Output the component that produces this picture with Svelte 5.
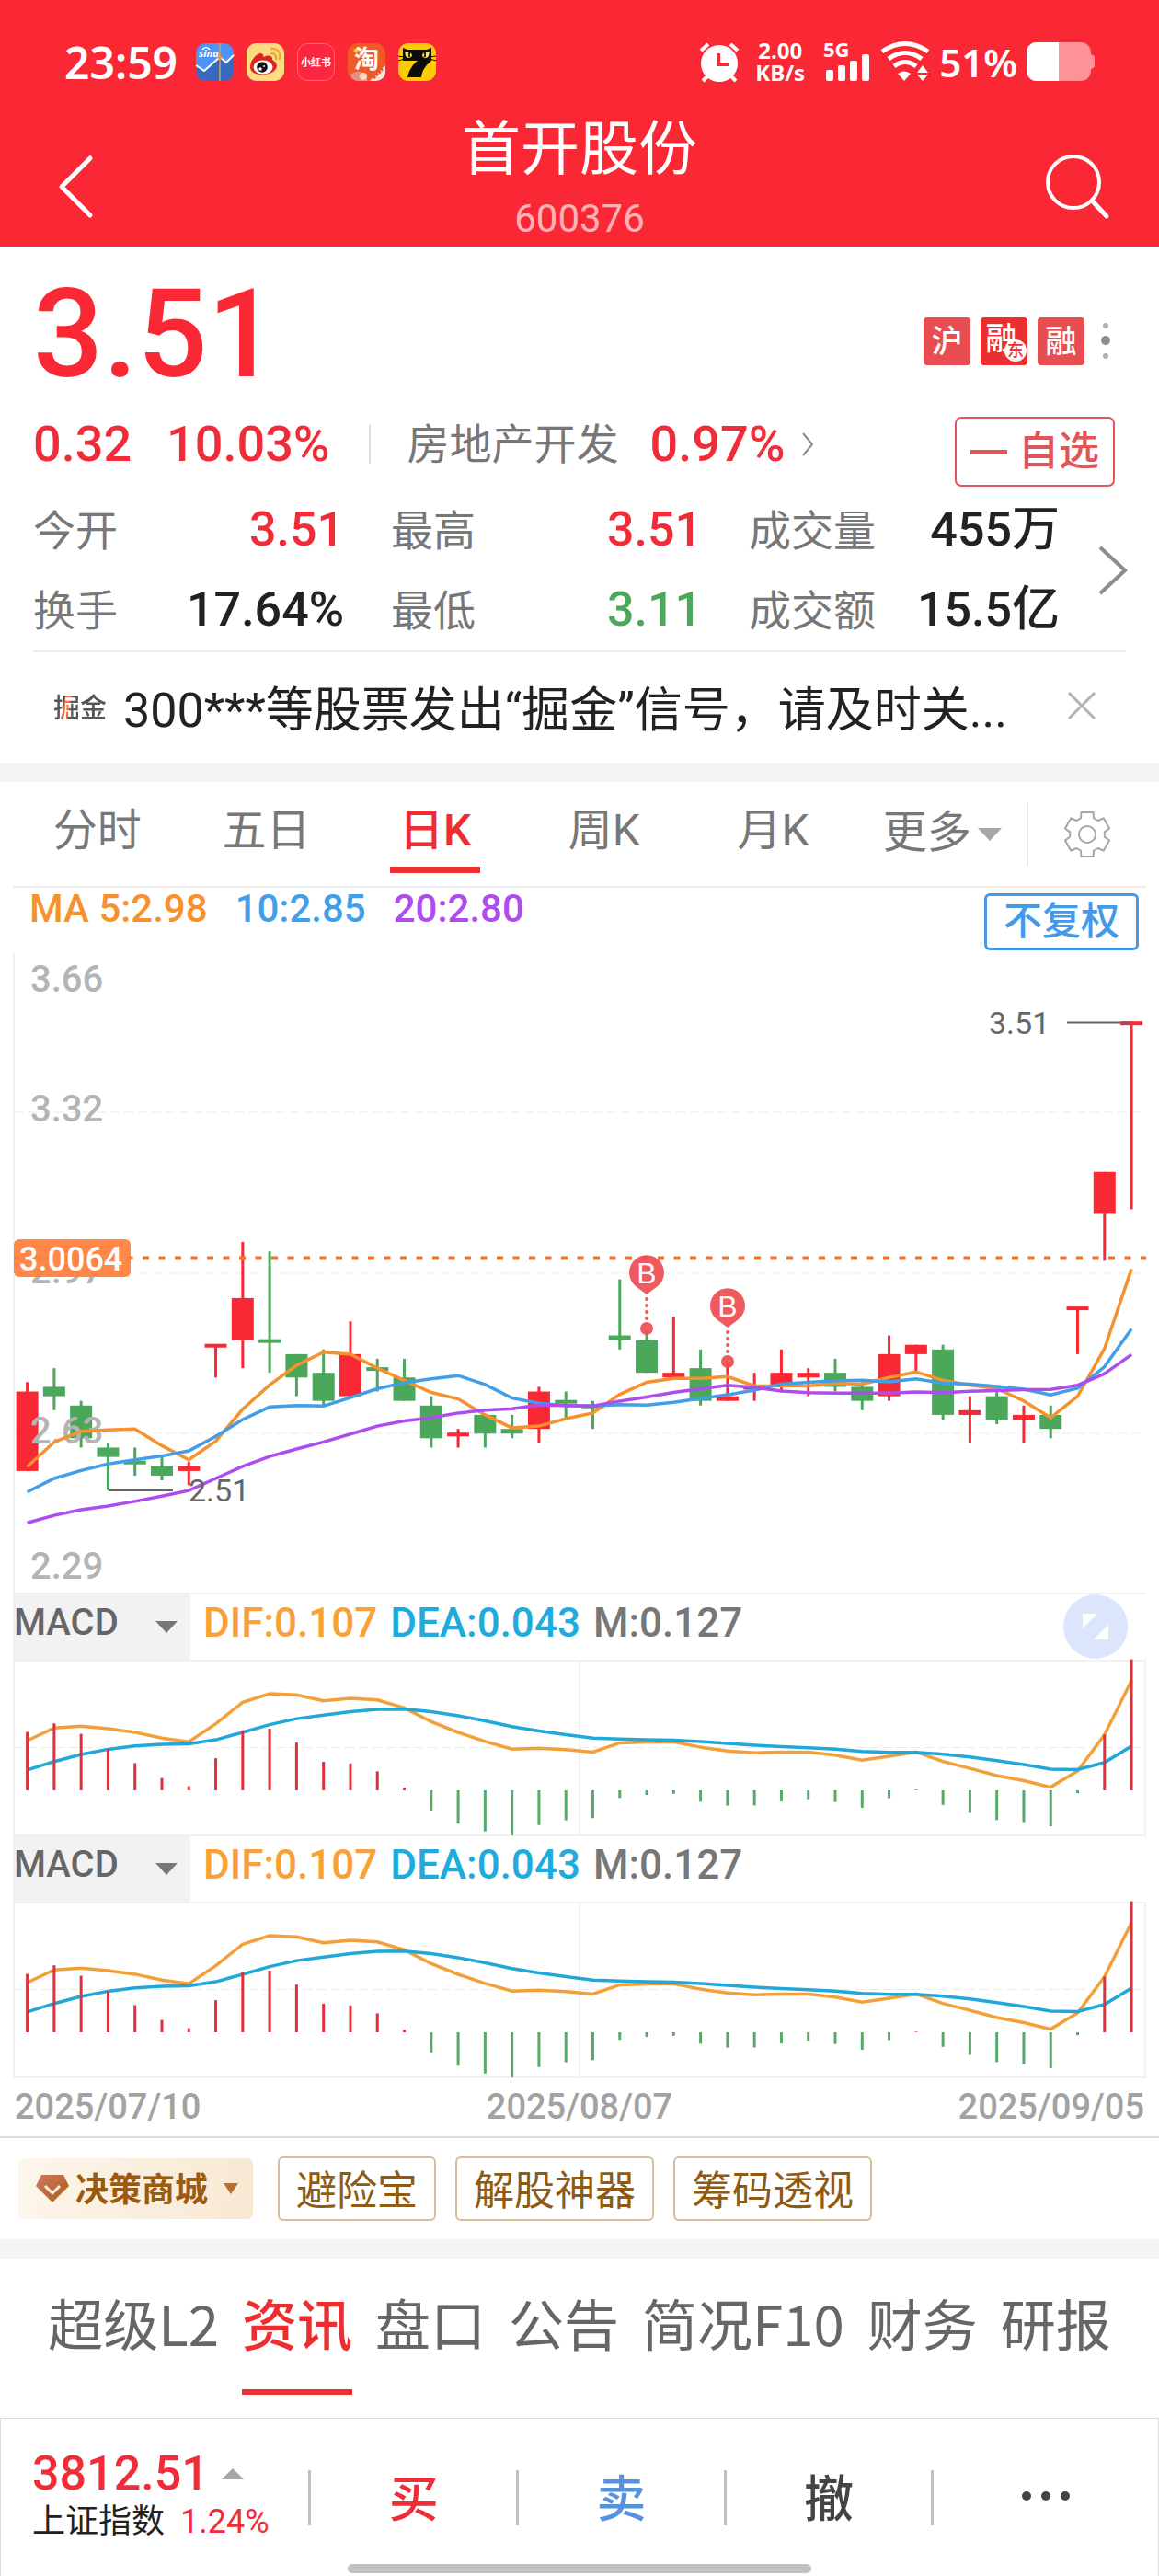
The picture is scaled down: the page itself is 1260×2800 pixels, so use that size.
<script>
  // Daily candles: [open, high, low, close]
  const CANDLES = [
    [2.55, 2.74, 2.55, 2.72], [2.73, 2.77, 2.68, 2.71], [2.69, 2.70, 2.60, 2.62],
    [2.60, 2.61, 2.51, 2.58], [2.57, 2.60, 2.54, 2.57], [2.56, 2.58, 2.53, 2.54],
    [2.55, 2.57, 2.52, 2.56], [2.82, 2.82, 2.75, 2.82], [2.83, 3.04, 2.77, 2.92],
    [2.83, 3.02, 2.76, 2.83], [2.80, 2.80, 2.71, 2.75], [2.76, 2.81, 2.69, 2.70],
    [2.71, 2.87, 2.71, 2.80], [2.77, 2.79, 2.72, 2.77], [2.75, 2.79, 2.70, 2.70],
    [2.69, 2.71, 2.60, 2.62], [2.63, 2.64, 2.60, 2.63], [2.67, 2.67, 2.60, 2.63],
    [2.64, 2.67, 2.62, 2.63], [2.64, 2.73, 2.61, 2.72], [2.70, 2.72, 2.66, 2.70],
    [2.69, 2.70, 2.64, 2.69], [2.84, 2.96, 2.81, 2.83], [2.83, 2.85, 2.76, 2.76],
    [2.75, 2.88, 2.75, 2.76], [2.77, 2.81, 2.69, 2.70], [2.70, 2.78, 2.70, 2.71],
    [2.73, 2.76, 2.70, 2.73], [2.73, 2.81, 2.72, 2.76], [2.75, 2.77, 2.71, 2.76],
    [2.76, 2.79, 2.72, 2.73], [2.73, 2.74, 2.68, 2.70], [2.71, 2.84, 2.70, 2.80],
    [2.80, 2.82, 2.76, 2.82], [2.81, 2.82, 2.66, 2.67], [2.67, 2.71, 2.61, 2.68],
    [2.71, 2.72, 2.65, 2.66], [2.66, 2.69, 2.61, 2.67], [2.67, 2.69, 2.62, 2.64],
    [2.90, 2.90, 2.80, 2.90], [3.10, 3.19, 3.00, 3.19], [3.51, 3.51, 3.11, 3.51]
  ];

  // Days that opened flat take their color from the previous close
  const FLAT_DOWN = [4, 9, 13, 20, 21];

  // Averages for the days whose window starts before the first candle
  const MA_HEADS = {
    5: [2.559, 2.612, 2.635, 2.638],
    10: [2.505, 2.534, 2.551, 2.565, 2.574, 2.582, 2.593, 2.624, 2.660],
    20: [
      2.439, 2.455, 2.467, 2.475, 2.485, 2.496, 2.508, 2.534, 2.560, 2.581,
      2.597, 2.612, 2.629, 2.646, 2.657, 2.664, 2.674, 2.680, 2.683
    ]
  };

  const STEP = 29.28;
  const TOP_PRICE = 3.66;
  const PX_PER_YUAN = 508;
  const x = (i) => 15.6 + i * STEP;
  const y = (price) => (TOP_PRICE - price) * PX_PER_YUAN;

  const closes = CANDLES.map((c) => c[3]);

  const candles = CANDLES.map(([open, high, low, close], i) => {
    const top = y(Math.max(open, close));
    const body = Math.abs(open - close) * PX_PER_YUAN;
    return {
      x: x(i),
      up: close > open || (close === open && !FLAT_DOWN.includes(i)),
      high: y(high),
      low: y(low),
      top: body < 4 ? top - 1 : top,
      height: Math.max(body, 4)
    };
  });

  function movingAverage(days) {
    return closes.map((_, i) => {
      if (i < days - 1) return MA_HEADS[days][i];
      return closes.slice(i - days + 1, i + 1).reduce((a, b) => a + b, 0) / days;
    });
  }

  function toPoints(values, scale) {
    return values.map((v, i) => `${x(i).toFixed(1)},${scale(v).toFixed(1)}`).join(' ');
  }

  const maLines = [
    { days: 5, color: '#f6922d' },
    { days: 10, color: '#439ee8' },
    { days: 20, color: '#ad4ded' }
  ].map((m) => ({ ...m, points: toPoints(movingAverage(m.days), y) }));

  function calculateMacd() {
    let fast = 2.5109;
    let slow = 2.4626;
    let dea = 0.0199;
    return closes.map((close, i) => {
      if (i > 0) {
        fast = (fast * 11 + close * 2) / 13;
        slow = (slow * 25 + close * 2) / 27;
        dea = dea * 0.8 + (fast - slow) * 0.2;
      }
      const dif = fast - slow;
      return { dif, dea, bar: (dif - dea) * 2 };
    });
  }

  const macd = calculateMacd();
  const ZERO = 142;
  const my = (v) => ZERO - v * 1118;
  const difPoints = toPoints(macd.map((m) => m.dif), my);
  const deaPoints = toPoints(macd.map((m) => m.dea), my);

  const axisLabels = [
    { text: '3.66', y: 43 },
    { text: '3.32', y: 184 },
    { text: '2.97', y: 360 },
    { text: '2.63', y: 534 },
    { text: '2.29', y: 681 }
  ];

  const markers = [
    { x: 689, y: 349 },
    { x: 777, y: 385 }
  ];

  const stats = [
    { label: '今开', value: '3.51', tone: 'up' },
    { label: '最高', value: '3.51', tone: 'up' },
    { label: '成交量', value: '455万', tone: '' },
    { label: '换手', value: '17.64%', tone: '' },
    { label: '最低', value: '3.11', tone: 'down' },
    { label: '成交额', value: '15.5亿', tone: '' }
  ];

  const periods = ['分时', '五日', '日K', '周K', '月K'];
  let period = '日K';

  const tools = ['避险宝', '解股神器', '筹码透视'];

  const sections = ['超级L2', '资讯', '盘口', '公告', '简况F10', '财务', '研报'];
  let section = '资讯';

  function gearPoints() {
    const points = [];
    for (let k = 0; k < 6; k++) {
      const mid = -90 + k * 60;
      for (const [offset, r] of [[-22, 19], [-15, 25], [15, 25], [22, 19]]) {
        const a = ((mid + offset) * Math.PI) / 180;
        points.push(`${(27 + r * Math.cos(a)).toFixed(1)},${(27 + r * Math.sin(a)).toFixed(1)}`);
      }
    }
    return points.join(' ');
  }
</script>

<div class="page">
  <header>
    <div class="status">
      <span class="clock">23:59</span>
      <div class="apps">
        <svg viewBox="0 0 41 41" aria-hidden="true">
          <rect width="41" height="41" rx="11" fill="#4d93f8" />
          <path d="M0 24 L9 30 L26 15 L33 21 L41 13 V30 A11 11 0 0 1 30 41 H11 A11 11 0 0 1 0 30 Z" fill="#3769bd" />
          <path d="M0 24 L9 30 L26 15 L33 21 L41 13" fill="none" stroke="#fff" stroke-width="2" />
          <path d="M26 0 V41" stroke="#d9a45a" stroke-width="1.4" />
          <circle cx="26" cy="15.500" r="2.400" fill="#f79a2c" />
          <path d="M7 7 q4 -5 8 0" fill="none" stroke="#fff" stroke-width="1.600" />
          <text x="3" y="15" class="sina">sina</text>
        </svg>
        <svg viewBox="0 0 41 41" aria-hidden="true">
          <rect width="41" height="41" rx="11" fill="#fbdc83" />
          <path d="M4 26 C4 18 12 10 16 11 C19 12 18 15 19 15 C24 12 29 14 28 18 C33 20 35 26 30 30 C24 36 4 36 4 26 Z" fill="#dc2420" />
          <ellipse cx="18" cy="26" rx="10.500" ry="7.500" fill="#fff" />
          <circle cx="17" cy="26" r="5.800" fill="#111" />
          <circle cx="15" cy="28" r="1.800" fill="#fff" />
          <circle cx="19" cy="25" r="0.900" fill="#fff" />
          <path d="M27 6 C33 5 38 10 36 17 M27 11 C31 11 33 14 32 17" fill="none" stroke="#f3a72c" stroke-width="2.400" stroke-linecap="round" />
        </svg>
        <svg viewBox="0 0 41 41" aria-hidden="true">
          <rect x="0.500" y="0.500" width="40" height="40" rx="11" fill="#fd2640" stroke="#ff6a78" />
          <text x="20.500" y="25" class="app-name" font-size="11">小红书</text>
        </svg>
        <svg viewBox="0 0 41 41" aria-hidden="true">
          <rect width="41" height="41" rx="11" fill="#f05a28" />
          <path d="M3 34 Q10 28 18 33 L22 41 H11 Q5 41 3 34 Z" fill="#e88f84" />
          <path d="M24 41 L41 24 V32 Q40 40 31 41 Z" fill="#f6e4dc" />
          <circle cx="17" cy="36" r="4" fill="#f5d9c4" />
          <path d="M28 38 L38 28" stroke="#e8552d" stroke-width="3" stroke-dasharray="3 1" />
          <circle cx="9" cy="8" r="2.500" fill="#ffc233" />
          <text x="20.500" y="27" class="app-name" font-size="27">淘</text>
        </svg>
        <svg viewBox="0 0 41 41" aria-hidden="true">
          <rect width="41" height="41" rx="11" fill="#fdcb06" />
          <path d="M5 5 L10 7 H31 L36 5 V19 C30 24 26 29 25 37 H10 C12 28 16 23 21 19 H5 Z" fill="#0d0d0d" />
          <path d="M0 14 L7 15 M0 19 L7 17 M41 14 L34 15 M41 19 L34 17" stroke="#0d0d0d" />
          <path d="M7 9 Q15 9 15 14 Q11 18 8 14 Z M34 9 Q26 9 26 14 Q30 18 33 14 Z" fill="#fbe26a" />
          <path d="M12 10 V15 M29 10 V15" stroke="#0d0d0d" stroke-width="1.800" />
        </svg>
      </div>
      <div class="system">
        <svg class="alarm" viewBox="0 0 46 44" aria-hidden="true">
          <circle cx="23" cy="24" r="20" fill="#fff" />
          <path d="M3 10 L11 3 M43 10 L35 3" stroke="#fff" stroke-width="4" />
          <path d="M10 38 L5 43 M36 38 L41 43" stroke="#fff" stroke-width="4" />
          <path d="M22 13 V25 H33" fill="none" stroke="#f92834" stroke-width="4" />
        </svg>
        <span class="speed"><b>2.00</b><b>KB/s</b></span>
        <svg class="signal" viewBox="0 0 52 44" aria-hidden="true">
          <text x="0" y="17" class="network">5G</text>
          <rect x="3" y="31" width="8" height="12" rx="2" fill="#fff" />
          <rect x="16" y="26" width="8" height="17" rx="2" fill="#fff" />
          <rect x="29" y="21" width="8" height="22" rx="2" fill="#fff" />
          <rect x="42" y="14" width="8" height="29" rx="2" fill="#fff" />
        </svg>
        <svg class="wifi" viewBox="0 0 54 44" aria-hidden="true">
          <path d="M2 11 Q27 -6 52 11 M9 19 Q27 6 45 19 M15 27 Q27 18 39 27" fill="none" stroke="#fff" stroke-width="5" />
          <path d="M19 35 Q26 30 33 35 L26 43 Z" fill="#fff" />
          <path d="M40 34 L46 26 L52 34 Z M40 36 H52 L46 43 Z" fill="#fff" />
        </svg>
        <span class="percent">51%</span>
        <svg class="battery" viewBox="0 0 74 42" aria-hidden="true">
          <rect width="70" height="42" rx="11" fill="#fd9299" />
          <path d="M70 13 Q74 14 74 17 V25 Q74 28 70 29 Z" fill="#fd9299" />
          <path d="M35 0 V42 H11 A11 11 0 0 1 0 31 V11 A11 11 0 0 1 11 0 Z" fill="#fff" />
        </svg>
      </div>
    </div>
    <nav>
      <button class="icon-button" aria-label="返回">
        <svg width="40" height="70" viewBox="0 0 40 70">
          <path d="M36 4 L5 35 L36 66" fill="none" stroke="#fff" stroke-width="5" stroke-linecap="round" stroke-linejoin="round" />
        </svg>
      </button>
      <div class="title">
        <h1>首开股份</h1>
        <p>600376</p>
      </div>
      <button class="icon-button" aria-label="搜索">
        <svg width="70" height="70" viewBox="0 0 70 70">
          <circle cx="31" cy="30" r="28" fill="none" stroke="#fff" stroke-width="4" />
          <path d="M51 50 L67 67" stroke="#fff" stroke-width="5" stroke-linecap="round" />
        </svg>
      </button>
    </nav>
  </header>

  <section class="quote">
    <div class="price-row">
      <strong class="price">3.51</strong>
      <div class="tags">
        <span class="tag">沪</span>
        <span class="tag strong">融<i>东</i></span>
        <span class="tag">融</span>
        <button class="icon-button" aria-label="更多标签">
          <svg width="24" height="51" viewBox="0 0 24 51">
            <circle cx="12" cy="9" r="3" fill="#b0b0b0" />
            <circle cx="12" cy="25" r="5" fill="#8c8c8c" />
            <circle cx="12" cy="42" r="3" fill="#b0b0b0" />
          </svg>
        </button>
      </div>
    </div>

    <div class="change-row">
      <span class="up">0.32</span>
      <span class="up change-rate">10.03%</span>
      <a class="industry" href="#industry">
        <span>房地产开发</span>
        <span class="up">0.97%</span>
        <svg width="14" height="28" viewBox="0 0 14 28" aria-hidden="true">
          <path d="M2 2 L12 14 L2 26" fill="none" stroke="#8a8a8a" stroke-width="2" />
        </svg>
      </a>
      <button class="watch">
        <svg width="40" height="5" viewBox="0 0 40 5" aria-hidden="true"><rect width="40" height="5" fill="#e05557" /></svg>
        自选
      </button>
    </div>

    <div class="stats-row">
      <dl class="stats">
        {#each stats as stat}
          <div class="stat">
            <dt>{stat.label}</dt>
            <dd class={stat.tone}>{stat.value}</dd>
          </div>
        {/each}
      </dl>
      <button class="icon-button" aria-label="展开行情">
        <svg width="32" height="54" viewBox="0 0 32 54">
          <path d="M2 2 L29 27 L2 52" fill="none" stroke="#8c8c8c" stroke-width="4" />
        </svg>
      </button>
    </div>

    <div class="notice">
      <span class="badge">掘金</span>
      <p>300***等股票发出“掘金”信号，请及时关...</p>
      <button class="icon-button" aria-label="关闭">
        <svg width="32" height="32" viewBox="0 0 32 32">
          <path d="M2 2 L30 30 M30 2 L2 30" stroke="#b4b4b4" stroke-width="3" />
        </svg>
      </button>
    </div>
  </section>

  <section class="chart">
    <div class="periods">
      {#each periods as name}
        <button class="period" class:active={period === name} on:click={() => (period = name)}>
          <span>{name}</span>
        </button>
      {/each}
      <label class="period more">
        <select aria-label="更多周期"><option>更多</option></select>
        <svg width="26" height="14" viewBox="0 0 26 14" aria-hidden="true"><path d="M0 0 H26 L13 14 Z" fill="#a6a6a6" /></svg>
      </label>
      <button class="settings" aria-label="图表设置">
        <svg width="54" height="54" viewBox="0 0 54 54">
          <polygon points={gearPoints()} fill="none" stroke="#a6a6a6" stroke-width="2" stroke-linejoin="round" />
          <circle cx="27" cy="27" r="9" fill="none" stroke="#a6a6a6" stroke-width="2" />
        </svg>
      </button>
    </div>

    <div class="plots">
      <div class="averages">
        <span class="ma5">MA 5:2.98</span>
        <span class="ma10">10:2.85</span>
        <span class="ma20">20:2.80</span>
        <button class="adjust">不复权</button>
      </div>

      <svg class="plot" viewBox="0 0 1232 698" role="img" aria-label="日K线">
        <path d="M1 0 V697 H1232" fill="none" stroke="#f2f2f2" stroke-width="2" />
        {#each [174, 349, 523] as gy}
          <line x1="1" x2="1226" y1={gy} y2={gy} stroke="#ebebeb" stroke-width="1" stroke-dasharray="10 5" />
        {/each}

        {#each candles as c}
          <g fill={c.up ? '#f82834' : '#4ba85b'}>
            <rect x={c.x - 1.5} y={c.high} width="3" height={c.low - c.high} />
            <rect x={c.x - 12} y={c.top} width="24" height={c.height} />
          </g>
        {/each}

        {#each axisLabels as label}
          <text x="19" y={label.y} class="axis">{label.text}</text>
        {/each}

        {#each maLines as line}
          <polyline points={line.points} fill="none" stroke={line.color} stroke-width="3.5" />
        {/each}

        <path d="M103.500 585 H174" stroke="#666" stroke-width="2" />
        <text x="191" y="597" class="extreme">2.51</text>
        <path d="M1146 76.500 H1216" stroke="#666" stroke-width="2" />
        <text x="1061" y="89" class="extreme">3.51</text>

        <line x1="1" x2="1232" y1="332.500" y2="332.500" stroke="#e8732f" stroke-width="4" stroke-dasharray="7 10.500" />
        <rect x="1" y="312" width="127" height="41" rx="6" fill="#ff7f3d" fill-opacity="0.940" />
        <text x="7" y="346" class="cost">3.0064</text>

        {#each markers as m}
          <g fill="#ef4b4f" fill-opacity="0.920">
            <path d="M{m.x - 12} {m.y + 14} A19 19 0 1 1 {m.x + 12} {m.y + 14} L{m.x} {m.y + 23} Z" />
            {#each [28, 35, 42, 49] as dot}
              <circle cx={m.x} cy={m.y + dot} r="2" />
            {/each}
            <circle cx={m.x} cy={m.y + 60} r="7" />
          </g>
          <text x={m.x} y={m.y + 11} class="marker">B</text>
        {/each}
      </svg>

      {#each ['指标一', '指标二'] as name, n}
        <div class="indicator">
          <label class="picker">
            <select aria-label={name}><option>MACD</option></select>
            <svg width="24" height="13" viewBox="0 0 24 13" aria-hidden="true"><path d="M0 0 H24 L12 13 Z" fill="#777" /></svg>
          </label>
          <span class="dif">DIF:0.107</span>
          <span class="dea">DEA:0.043</span>
          <span class="bar">M:0.127</span>
          {#if n === 0}
            <button class="expand" aria-label="全屏">
              <svg width="28" height="28" viewBox="0 0 28 28">
                <path d="M0 0 H16 L0 16 Z M28 12 V28 H12 Z" fill="#fff" />
              </svg>
            </button>
          {/if}
        </div>
        <svg class="plot" viewBox="0 0 1232 192" role="img" aria-label="MACD">
          <rect x="1" y="1" width="1230" height="190" fill="none" stroke="#f2f2f2" stroke-width="2" />
          <line x1="616" x2="616" y1="0" y2="192" stroke="#f2f2f2" stroke-width="2" />
          <line x1="1" x2="1226" y1="95.500" y2="95.500" stroke="#ebebeb" stroke-dasharray="10 5" />
          <polyline points={difPoints} fill="none" stroke="#f3a03a" stroke-width="3.500" />
          <polyline points={deaPoints} fill="none" stroke="#20a8d8" stroke-width="3.500" />
          {#each macd as m, i}
            <rect
              x={x(i) - 1.5}
              y={m.bar > 0 ? my(m.bar) : ZERO}
              width="3"
              height={Math.abs(m.bar) * 1118}
              fill={m.bar > 0 ? '#e0303c' : '#58a868'}
            />
          {/each}
        </svg>
      {/each}

      <div class="dates">
        <span>2025/07/10</span>
        <span>2025/08/07</span>
        <span>2025/09/05</span>
      </div>
    </div>

    <div class="tools">
      <button class="mall">
        <svg width="36" height="30" viewBox="0 0 36 30" aria-hidden="true">
          <defs>
            <linearGradient id="gem" x1="0" y1="0" x2="1" y2="1">
              <stop offset="0" stop-color="#cf7763" />
              <stop offset="1" stop-color="#a85f17" />
            </linearGradient>
          </defs>
          <path d="M6 0 H30 L36 12 L18 30 L0 12 Z" fill="url(#gem)" />
          <path d="M10 12 L18 20 L26 12" fill="none" stroke="#fbeee0" stroke-width="3" />
        </svg>
        <span>决策商城</span>
        <svg width="16" height="12" viewBox="0 0 16 12" aria-hidden="true"><path d="M0 0 H16 L8 12 Z" fill="#b8702a" /></svg>
      </button>
      {#each tools as tool}
        <button class="tool">{tool}</button>
      {/each}
    </div>
  </section>

  <div class="sections">
    {#each sections as name}
      <button class:active={section === name} on:click={() => (section = name)}>{name}</button>
    {/each}
  </div>

  <footer>
    <a class="index" href="#index">
      <span class="index-value">
        3812.51
        <svg width="24" height="12" viewBox="0 0 24 12" aria-hidden="true"><path d="M0 12 H24 L12 0 Z" fill="#a6a6a6" /></svg>
      </span>
      <span class="index-name">上证指数 <span class="up">1.24%</span></span>
    </a>
    <button class="trade buy">买</button>
    <button class="trade sell">卖</button>
    <button class="trade">撤</button>
    <button class="trade" aria-label="更多">
      <svg width="54" height="12" viewBox="0 0 54 12">
        <circle cx="6" cy="6" r="5" fill="#444" />
        <circle cx="27" cy="6" r="5" fill="#444" />
        <circle cx="48" cy="6" r="5" fill="#444" />
      </svg>
    </button>
    <div class="home"></div>
  </footer>
</div>

<style>
  :global(body) {
    background: #fff;
  }

  .page {
    font-family: Roboto, 'Noto Sans CJK SC', sans-serif;
    font-size: 48px;
    color: #222;
    background: #fff;
  }

  h1, p, dl, dd {
    margin: 0;
    font-weight: 400;
  }

  button, select {
    margin: 0;
    padding: 0;
    border: 0;
    background: none;
    font: inherit;
    color: inherit;
    appearance: none;
    cursor: pointer;
  }

  a {
    color: inherit;
    text-decoration: none;
  }

  svg {
    display: block;
    flex: none;
    overflow: visible;
  }

  .up {
    color: #f02c38;
  }

  .down {
    color: #4ba85b;
  }

  header {
    background: #f92834;
    color: #fff;
  }

  .status {
    display: flex;
    align-items: center;
    height: 118px;
    padding: 8px 70px 0;
    font-family: 'Noto Sans', 'Open Sans', sans-serif;
  }

  .clock {
    font-size: 48px;
    font-weight: 600;
  }

  .apps {
    display: flex;
    gap: 14px;
    margin-left: 20px;
  }

  .apps svg {
    width: 41px;
    height: 41px;
  }

  .sina {
    font: italic 700 11px 'Noto Sans', sans-serif;
    fill: #fff;
  }

  .app-name {
    font-family: 'Noto Sans CJK SC', sans-serif;
    font-weight: 700;
    fill: #fff;
    text-anchor: middle;
  }

  .system {
    display: flex;
    align-items: center;
    margin-left: auto;
  }

  .alarm {
    width: 46px;
    height: 44px;
  }

  .speed {
    display: flex;
    flex-direction: column;
    align-items: center;
    width: 54px;
    margin: 0 20px 0 16px;
    font-size: 24px;
    line-height: 24px;
  }

  .speed b {
    font-weight: 700;
  }

  .signal {
    width: 52px;
    height: 44px;
  }

  .network {
    font: 700 22px 'Noto Sans', sans-serif;
    fill: #fff;
  }

  .wifi {
    width: 54px;
    height: 44px;
    margin: 0 10px;
  }

  .percent {
    font-size: 42px;
    font-weight: 600;
  }

  .battery {
    width: 74px;
    height: 42px;
    margin-left: 10px;
  }

  nav {
    display: flex;
    justify-content: space-between;
    height: 140px;
    padding: 2px 54px 0 62px;
  }

  .icon-button {
    display: flex;
    align-items: center;
    justify-content: center;
  }

  nav .icon-button {
    width: 70px;
    height: 70px;
    margin-top: 40px;
  }

  nav .icon-button:first-child {
    width: 62px;
    justify-content: flex-start;
  }

  .title {
    text-align: center;
  }

  h1 {
    font-size: 64px;
    line-height: 70px;
  }

  .title p {
    margin-top: 10px;
    font-size: 42px;
    line-height: 60px;
    color: #ffb3b7;
  }

  .price-row {
    display: flex;
    justify-content: space-between;
    align-items: center;
    height: 179px;
    padding: 6px 46px 0 36px;
  }

  .price {
    font-size: 134px;
    font-weight: 500;
    color: #f92834;
  }

  .tags {
    display: flex;
    gap: 11px;
    padding-top: 14px;
  }

  .tag {
    position: relative;
    width: 51px;
    border-radius: 4px;
    background: #e84d51;
    color: #fff;
    font-size: 34px;
    font-weight: 500;
    line-height: 52px;
    text-align: center;
  }

  .tag.strong {
    background: #ec2e30;
    text-indent: -6px;
    line-height: 46px;
  }

  .tag i {
    position: absolute;
    right: 1px;
    bottom: 4px;
    width: 24px;
    height: 24px;
    border-radius: 50%;
    background: #fff;
    color: #ec2e30;
    font-size: 18px;
    font-style: normal;
    line-height: 23px;
    text-indent: 0;
  }

  .change-row {
    display: flex;
    align-items: flex-start;
    height: 76px;
    padding: 0 48px 0 36px;
    font-size: 54px;
    line-height: 60px;
  }

  .change-row .up {
    font-weight: 500;
  }

  .change-rate {
    margin-left: 38px;
  }

  .industry {
    display: flex;
    align-items: center;
    gap: 34px;
    margin-left: 42px;
    color: #777;
  }

  .industry span:first-child {
    font-size: 46px;
  }

  .industry svg {
    margin-left: -16px;
  }

  .industry::before {
    content: '';
    width: 2px;
    height: 42px;
    margin-right: 6px;
    background: #ddd;
  }

  .watch {
    display: flex;
    align-items: center;
    gap: 12px;
    height: 76px;
    margin-left: auto;
    padding: 0 15px;
    border: 2px solid #e05557;
    border-radius: 7px;
    font-size: 44px;
    font-weight: 500;
    color: #e05557;
  }

  .stats-row {
    display: flex;
    align-items: center;
    justify-content: space-between;
    padding: 4px 34px 0 36px;
  }

  .stats {
    display: grid;
    flex: 1;
    grid-template-columns: repeat(3, 1fr);
    column-gap: 51px;
    padding-right: 42px;
  }

  .stat {
    display: flex;
    justify-content: space-between;
    align-items: baseline;
    line-height: 86px;
    white-space: nowrap;
  }

  dt {
    font-size: 46px;
    color: #777;
  }

  dd {
    font-size: 52px;
    font-weight: 500;
  }

  .notice {
    display: flex;
    align-items: center;
    height: 116px;
    margin: 0 36px;
    padding: 0 32px 4px 22px;
    border-top: 2px solid #ececec;
  }

  .badge {
    background: linear-gradient(100deg, #555 22%, #f2703c 24%, #f2703c 32%, #555 34%);
    background-clip: text;
    color: transparent;
    font-size: 29px;
    font-weight: 500;
  }

  .notice p {
    flex: 1;
    margin-left: 18px;
    font-size: 52px;
    white-space: nowrap;
  }

  .chart, .sections {
    border-top: 21px solid #f4f4f4;
  }

  .periods {
    display: flex;
    align-items: center;
    height: 113px;
    margin: 0 14px;
    border-bottom: 2px solid #ececec;
    color: #777;
  }

  .period {
    display: flex;
    flex: 1;
    justify-content: center;
    align-items: center;
    height: 113px;
  }

  .period span {
    width: 98px;
    padding: 3px 0 4px;
    border-bottom: 7px solid transparent;
    line-height: 70px;
    text-align: center;
  }

  .period.active {
    color: #ec2e30;
    font-weight: 500;
  }

  .period.active span {
    border-color: #ec2e30;
  }

  .more {
    gap: 6px;
  }

  .more select {
    padding-bottom: 4px;
  }

  .settings {
    display: flex;
    justify-content: center;
    align-items: center;
    width: 130px;
    height: 70px;
    border-left: 2px solid #e6e6e6;
  }

  .plots {
    margin: 0 14px;
  }

  .averages {
    display: flex;
    gap: 30px;
    height: 70px;
    padding-left: 18px;
    font-size: 42px;
    font-weight: 500;
    line-height: 46px;
  }

  .ma5 {
    color: #f6922d;
  }

  .ma10 {
    color: #439ee8;
  }

  .ma20 {
    color: #ad4ded;
  }

  .adjust {
    height: 62px;
    margin: 6px 8px 0 auto;
    padding: 0 18px;
    border: 3px solid #4499ea;
    border-radius: 6px;
    color: #4499ea;
  }

  .plot {
    width: 100%;
    height: auto;
  }

  .axis {
    font-size: 40px;
    font-weight: 500;
    fill: #b4b4b4;
  }

  .extreme {
    font-size: 34px;
    fill: #666;
  }

  .cost {
    font-size: 36px;
    font-weight: 500;
    fill: #fff;
  }

  .marker {
    font: 500 32px 'Liberation Sans', sans-serif;
    fill: #fff;
    text-anchor: middle;
  }

  .indicator {
    display: flex;
    gap: 14px;
    height: 71px;
    font-size: 44px;
    font-weight: 500;
    line-height: 62px;
  }

  .picker {
    display: flex;
    align-items: center;
    justify-content: space-between;
    width: 178px;
    padding: 0 14px 0 1px;
    background: #f2f2f2;
    color: #666;
  }

  .picker select {
    height: 62px;
    align-self: flex-start;
    font-size: 40px;
  }

  .dif {
    color: #f9a136;
  }

  .dea {
    color: #1eabdd;
  }

  .bar {
    color: #777;
  }

  .expand {
    display: flex;
    align-items: center;
    justify-content: center;
    width: 70px;
    height: 70px;
    margin: 0 20px 0 auto;
    border-radius: 50%;
    background: #dbe5fc;
  }

  .dates {
    display: flex;
    justify-content: space-between;
    padding: 0 2px;
    font-size: 38px;
    font-weight: 500;
    line-height: 63px;
    color: #a2a2a2;
  }

  .tools {
    display: flex;
    align-items: center;
    gap: 21px;
    height: 110px;
    padding: 0 20px;
    border-top: 2px solid #dcdcdc;
  }

  .mall {
    display: flex;
    align-items: center;
    height: 66px;
    margin-right: 6px;
    padding: 0 16px 0 19px;
    border-radius: 6px;
    background: linear-gradient(100deg, #fdf6ec, #f8e8d2);
    color: #9c5a0e;
    font-size: 36px;
    font-weight: 700;
  }

  .mall span {
    margin: 0 17px 0 7px;
    padding-bottom: 4px;
  }

  .tool {
    height: 70px;
    padding: 0 18px 4px;
    border: 2px solid #d8bd9a;
    border-radius: 6px;
    font-size: 44px;
    color: #905a12;
  }

  .sections {
    display: flex;
    justify-content: center;
    gap: 25px;
    height: 173px;
    color: #666;
    font-family: 'Noto Sans CJK SC', sans-serif;
    font-size: 60px;
  }

  .sections button {
    height: 148px;
    padding-bottom: 4px;
    border-bottom: 6px solid transparent;
    line-height: 136px;
    white-space: nowrap;
  }

  .sections .active {
    border-color: #ec2e30;
    color: #ec2e30;
    font-weight: 500;
  }

  footer {
    position: relative;
    display: grid;
    grid-template-columns: 335fr 226fr 226fr 226fr 247fr;
    align-items: center;
    height: 171px;
    border: 1px solid #dcdcdc;
    border-bottom: 0;
  }

  .index {
    padding: 0 0 8px 34px;
    white-space: nowrap;
  }

  .index-value {
    display: flex;
    align-items: center;
    gap: 14px;
    font-size: 52px;
    font-weight: 500;
    line-height: 60px;
    color: #f02c38;
  }

  .index-name {
    display: block;
    font-size: 36px;
    line-height: 44px;
  }

  .index-name .up {
    margin-left: 8px;
  }

  .trade {
    display: flex;
    align-items: center;
    justify-content: center;
    height: 60px;
    padding-bottom: 4px;
    border-left: 3px solid #c0c0c0;
    color: #444;
    font-size: 54px;
    font-weight: 500;
  }

  .buy {
    color: #f02c38;
  }

  .sell {
    color: #5594dc;
  }

  .home {
    position: absolute;
    left: 30%;
    bottom: 3px;
    width: 40%;
    height: 10px;
    border-radius: 5px;
    background: #c2c2c2;
  }
</style>
